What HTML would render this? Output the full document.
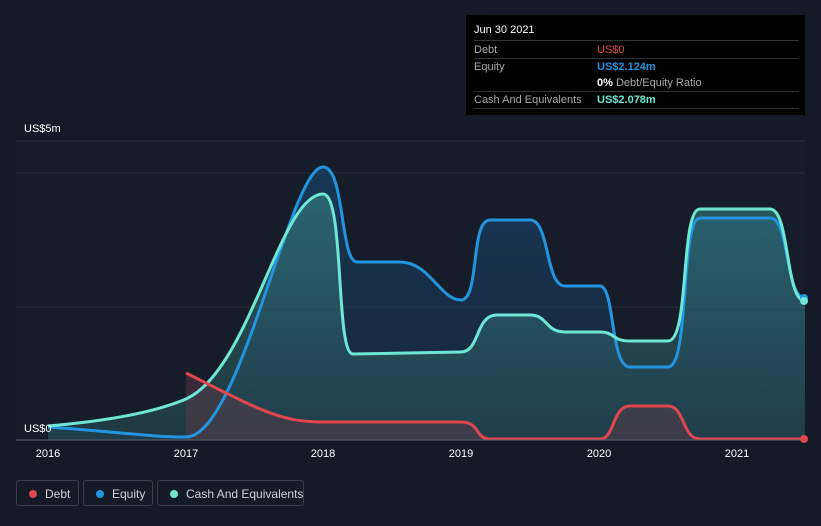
<!DOCTYPE html>
<html><head><meta charset="utf-8"><style>
body{margin:0;width:821px;height:526px;background:#151b26;font-family:"Liberation Sans",sans-serif;overflow:hidden;position:relative}
.tt{position:absolute;left:466px;top:15px;width:339px;height:100px;background:#000;color:#fff;font-size:11px}
.tt .r{position:absolute;left:8px;right:6px;border-bottom:1px solid #333;height:17px}
.tt span{position:absolute;top:3px;white-space:nowrap}
.lg{position:absolute;top:480px;height:26px;border:1px solid #3a404a;border-radius:3px;color:#d0d3d8;font-size:12px;line-height:26px;box-sizing:border-box;white-space:nowrap}
.lg i{position:absolute;left:12px;top:9px;width:8px;height:8px;border-radius:50%}
</style></head><body>
<svg width="821" height="526" style="position:absolute;left:0;top:0">
<defs>
<linearGradient id="ge" x1="0" y1="0" x2="0" y2="1"><stop offset="0" stop-color="#1a4a78" stop-opacity=".6"/><stop offset="1" stop-color="#1a3550" stop-opacity=".4"/></linearGradient>
<linearGradient id="gc" x1="0" y1="0" x2="0" y2="1"><stop offset="0" stop-color="#3a8a8a" stop-opacity=".55"/><stop offset="1" stop-color="#2a5a60" stop-opacity=".45"/></linearGradient>
</defs>
<rect x="16" y="141" width="789" height="299" fill="#161d28"/>
<line x1="16" y1="141" x2="805" y2="141" stroke="#2a303a"/>
<line x1="16" y1="173" x2="805" y2="173" stroke="#2a303a"/>
<line x1="16" y1="307" x2="805" y2="307" stroke="#2a303a"/>
<path d="M48,427 C120,432 150,437 186,437 C240,437 290,167 323,167 C345,167 340,262 357,262 L400,262 C430,262 440,300 461,300 C480,300 470,220 490,220 L530,220 C550,220 545,286 565,286 L600,286 C615,286 610,367 630,367 L668,367 C690,367 680,218 700,218 L770,218 C790,218 785,298 805,298 L805,440 L48,440Z" fill="url(#ge)"/>
<path d="M48,426 C120,420 160,410 186,399 C250,370 280,194 323,194 C345,194 335,354 353,354 L461,352 C480,352 475,315 497,315 L530,315 C548,315 545,332 565,332 L600,332 C615,332 612,341 630,341 L668,341 C690,341 680,209 700,209 L770,209 C790,209 785,301 805,301 L805,440 L48,440Z" fill="url(#gc)"/>
<path d="M186,373 C260,410 280,422 323,422 L461,422 C480,422 475,439 490,439 L600,439 C615,439 612,406 630,406 L668,406 C685,406 682,439 700,439 L805,439 L805,440 L186,440Z" fill="#5a3a45" fill-opacity=".5"/>
<path d="M48,427 C120,432 150,437 186,437 C240,437 290,167 323,167 C345,167 340,262 357,262 L400,262 C430,262 440,300 461,300 C480,300 470,220 490,220 L530,220 C550,220 545,286 565,286 L600,286 C615,286 610,367 630,367 L668,367 C690,367 680,218 700,218 L770,218 C790,218 785,298 805,298" fill="none" stroke="#2394df" stroke-width="3"/>
<path d="M48,426 C120,420 160,410 186,399 C250,370 280,194 323,194 C345,194 335,354 353,354 L461,352 C480,352 475,315 497,315 L530,315 C548,315 545,332 565,332 L600,332 C615,332 612,341 630,341 L668,341 C690,341 680,209 700,209 L770,209 C790,209 785,301 805,301" fill="none" stroke="#6ee7d5" stroke-width="3"/>
<path d="M186,373 C260,410 280,422 323,422 L461,422 C480,422 475,439 490,439 L600,439 C615,439 612,406 630,406 L668,406 C685,406 682,439 700,439 L805,439" fill="none" stroke="#e0474c" stroke-width="3"/>
<line x1="16" y1="440" x2="805" y2="440" stroke="#5a606a"/>
<circle cx="804" cy="298" r="4" fill="#2394df"/><circle cx="804" cy="301" r="4" fill="#6ee7d5"/><circle cx="804" cy="439" r="4" fill="#e0474c"/>
<g fill="#fff" font-size="11" font-family="Liberation Sans,sans-serif">
<text x="24" y="132">US$5m</text>
<text x="24" y="432">US$0</text>
<g text-anchor="middle"><text x="48" y="457">2016</text><text x="186" y="457">2017</text><text x="323" y="457">2018</text><text x="461" y="457">2019</text><text x="599" y="457">2020</text><text x="737" y="457">2021</text></g>
</g>
</svg>
<div class="tt">
<div style="position:absolute;left:8px;top:9px;font-size:11px">Jun 30 2021</div>
<div class="r" style="top:25px;border-top:1px solid #333"><span style="color:#aaa">Debt</span><span style="left:123px;color:#e0474c">US$0</span></div>
<div class="r" style="top:43px;border-bottom:none"><span style="color:#aaa">Equity</span><span style="left:123px;color:#2394df;font-weight:bold">US$2.124m</span></div>
<div class="r" style="top:59px"><span style="left:123px"><b>0%</b> <span style="position:static;color:#aaa">Debt/Equity Ratio</span></span></div>
<div class="r" style="top:76px"><span style="color:#aaa">Cash And Equivalents</span><span style="left:123px;color:#6ee7d5;font-weight:bold">US$2.078m</span></div>
</div>
<div class="lg" style="left:16px;width:63px"><i style="background:#e0474c"></i><span style="position:absolute;left:28px">Debt</span></div>
<div class="lg" style="left:83px;width:70px"><i style="background:#2394df"></i><span style="position:absolute;left:28px">Equity</span></div>
<div class="lg" style="left:157px;width:147px"><i style="background:#6ee7d5"></i><span style="position:absolute;left:28px">Cash And Equivalents</span></div>
</body></html>
